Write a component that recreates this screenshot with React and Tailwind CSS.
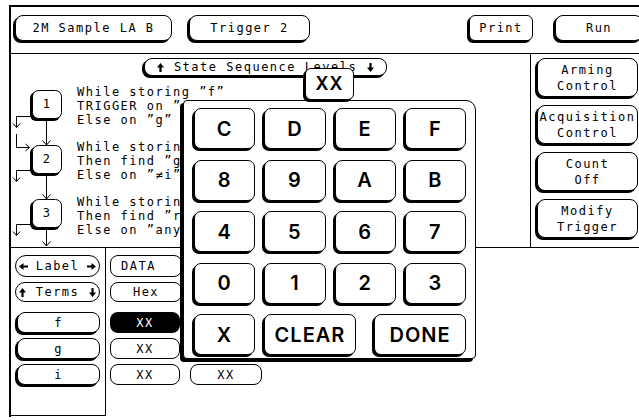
import React from "react";

function Up() {
  return (
    <svg width="7" height="9" viewBox="0 0 7 9" className="shrink-0">
      <path d="M3.5 0L7 4.5H4.6V9H2.4V4.5H0Z" fill="#000" />
    </svg>
  );
}
function Down() {
  return (
    <svg width="7" height="9" viewBox="0 0 7 9" className="shrink-0">
      <path d="M3.5 9L7 4.5H4.6V0H2.4V4.5H0Z" fill="#000" />
    </svg>
  );
}
function Left() {
  return (
    <svg width="9" height="7" viewBox="0 0 9 7" className="shrink-0">
      <path d="M0 3.5L4.5 0V2.4H9V4.6H4.5V7Z" fill="#000" />
    </svg>
  );
}
function Right() {
  return (
    <svg width="9" height="7" viewBox="0 0 9 7" className="shrink-0">
      <path d="M9 3.5L4.5 0V2.4H0V4.6H4.5V7Z" fill="#000" />
    </svg>
  );
}

function Flow() {
  const boxes = [
    { y: 90, n: "1" },
    { y: 145, n: "2" },
    { y: 199, n: "3" },
  ];
  return (
    <svg
      className="absolute left-0 top-0 pointer-events-none"
      width="519"
      height="193"
      viewBox="11 54 519 193"
      fill="none"
      stroke="#000"
      strokeWidth="1"
    >
      {boxes.map((b) => (
        <g key={b.n}>
          <rect x={30} y={b.y + 2} width={30} height={29} rx={6} fill="#000" stroke="none" />
          <rect x={32.5} y={b.y + 0.5} width={29} height={28} rx={6} fill="#fff" />
          <text
            x={47}
            y={b.y + 18}
            textAnchor="middle"
            fill="#000"
            stroke="none"
            fontFamily="DejaVu Sans Mono, monospace"
            fontSize="12"
          >
            {b.n}
          </text>
        </g>
      ))}
      <path d="M46.5 121V145M42.5 140.5L46.5 145L50.5 140.5" />
      <path d="M46.5 176V199M42.5 194.5L46.5 199L50.5 194.5" />
      <path d="M46.5 230V246M42.5 241.5L46.5 246L50.5 241.5" />
      <path d="M30 116.5H16.5V127M13 123.5L16.5 127.5L20 123.5" />
      <path d="M16.5 134V147.5H29M25.5 144L29.5 147.5L25.5 151" />
      <path d="M30 170.5H16.5V181M13 177.5L16.5 181.5L20 177.5" />
      <path d="M30 224.5H16.5V235M13 231.5L16.5 235.5L20 231.5" />
    </svg>
  );
}

const raised =
  "shrink-0 border border-black bg-white shadow-[-2px_2px_0_#000] flex items-center justify-center";

function Key({ children, className = "" }) {
  return (
    <div
      className={
        "h-[41px] border border-black rounded-[7px] bg-white shadow-[-2px_2px_0_#000] flex items-center justify-center font-['Inter',sans-serif] text-[20px] font-semibold tracking-[1px] " +
        className
      }
    >
      {children}
    </div>
  );
}

export default function App() {
  const keys = ["C", "D", "E", "F", "8", "9", "A", "B", "4", "5", "6", "7", "0", "1", "2", "3"];
  return (
    <div className="w-[639px] h-[420px] bg-white relative overflow-hidden text-black font-['DejaVu_Sans_Mono',monospace] text-[12px] tracking-[1.5px] leading-[14px]">
      <div className="ml-[9px] mt-[5px] w-[630px] h-[412px] border-l-2 border-t-2 border-black flex flex-col">
        {/* header */}
        <div className="h-[47px] shrink-0 border-b border-black flex items-start pt-[8px]">
          <div className={raised + " ml-[4px] w-[157px] h-[26px] rounded-[8px]"}>2M Sample LA B</div>
          <div className={raised + " ml-[17px] w-[121px] h-[26px] rounded-[8px]"}>Trigger 2</div>
          <div className={raised + " ml-[159px] w-[64px] h-[26px] rounded-[6px]"}>Print</div>
          <div className={raised + " ml-[22px] w-[88px] h-[26px] rounded-[8px]"}>Run</div>
        </div>

        {/* middle */}
        <div className="h-[194px] shrink-0 border-b border-black flex">
          <div className="relative w-[520px] shrink-0 border-r border-black">
            <Flow />
            <div className="ml-[133px] mt-[4px] w-[243px] h-[18px] border border-black rounded-[8px] bg-white shadow-[-2px_2px_0_#000] flex items-center justify-between px-[12px]">
              <Up />
              <span className="whitespace-nowrap">State Sequence Levels</span>
              <Down />
            </div>
            <div className="ml-[66px] mt-[9px] flex flex-col gap-[13px] whitespace-nowrap">
              <div className="flex flex-col">
                <span>While storing ”f”</span>
                <span>TRIGGER on ”g”</span>
                <span>Else on ”g”</span>
              </div>
              <div className="flex flex-col">
                <span>While storing</span>
                <span>Then find ”g”</span>
                <span>Else on ”≠i”</span>
              </div>
              <div className="flex flex-col">
                <span>While storing</span>
                <span>Then find ”r”</span>
                <span>Else on ”any”</span>
              </div>
            </div>
          </div>
          <div className="flex flex-col pt-[4px] pl-[6px] gap-[8px] leading-[16px]">
            <div className={raised + " w-[101px] h-[39px] rounded-[8px] flex-col"}>
              <span>Arming</span>
              <span>Control</span>
            </div>
            <div className={raised + " w-[101px] h-[39px] rounded-[8px] flex-col"}>
              <span>Acquisition</span>
              <span>Control</span>
            </div>
            <div className={raised + " w-[101px] h-[39px] rounded-[8px] flex-col"}>
              <span>Count</span>
              <span>Off</span>
            </div>
            <div className={raised + " w-[101px] h-[39px] rounded-[8px] flex-col"}>
              <span>Modify</span>
              <span>Trigger</span>
            </div>
          </div>
        </div>

        {/* bottom */}
        <div className="flex flex-1">
          <div className="w-[95px] h-[168px] shrink-0 border-r border-b border-black flex flex-col pl-[4px] pt-[7px]">
            <div className="w-[85px] h-[22px] border border-black rounded-full flex items-center justify-between px-[3px]">
              <Left />
              <span>Label</span>
              <Right />
            </div>
            <div className="mt-[5px] w-[85px] h-[20px] border border-black rounded-full flex items-center justify-between px-[3px]">
              <Up />
              <span>Terms</span>
              <Down />
            </div>
            <div className={raised + " mt-[10px] ml-[2px] w-[83px] h-[21px] rounded-[8px]"}>f</div>
            <div className={raised + " mt-[5px] ml-[2px] w-[83px] h-[21px] rounded-[8px]"}>g</div>
            <div className={raised + " mt-[5px] ml-[2px] w-[83px] h-[21px] rounded-[8px]"}>i</div>
          </div>
          <div className="flex flex-col pl-[4px] pt-[7px]">
            <div className="w-[72px] h-[22px] border border-black rounded-[8px] flex items-center pl-[10px]">DATA</div>
            <div className="mt-[5px] w-[72px] h-[20px] border border-black rounded-[8px] flex items-center justify-center">Hex</div>
            <div className="mt-[10px] w-[70px] h-[21px] bg-black text-white rounded-[8px] flex items-center justify-center">XX</div>
            <div className="mt-[5px] w-[70px] h-[21px] border border-black rounded-[8px] flex items-center justify-center">XX</div>
            <div className="mt-[5px] flex gap-[10px]">
              <div className="w-[70px] h-[21px] border border-black rounded-[8px] flex items-center justify-center">XX</div>
              <div className="w-[72px] h-[21px] border border-black rounded-[8px] flex items-center justify-center">XX</div>
            </div>
          </div>
        </div>
      </div>

      {/* keypad overlay */}
      <div className="absolute left-[183px] top-[100px] w-[293px] h-[259px] bg-white border border-black rounded-[4px] rounded-tr-[10px] shadow-[-3px_3px_0_#000] pt-[7px] pl-[10px]">
        <div className="w-[272px] grid grid-cols-4 gap-x-[9px] gap-y-[10.5px]">
          {keys.map((k) => (
            <Key key={k}>{k}</Key>
          ))}
        </div>
        <div className="w-[272px] mt-[10.5px] flex">
          <Key className="w-[61px]">X</Key>
          <Key className="ml-[9px] w-[92px]">CLEAR</Key>
          <Key className="ml-auto w-[92px]">DONE</Key>
        </div>
      </div>

      {/* XX label overlay */}
      <div className="absolute left-[305px] top-[68px] w-[49px] h-[32px] bg-white border border-black rounded-[6px] shadow-[-2px_2px_0_#000] flex items-center justify-center font-['Inter',sans-serif] text-[18px] font-semibold tracking-[1px]">
        XX
      </div>
    </div>
  );
}
